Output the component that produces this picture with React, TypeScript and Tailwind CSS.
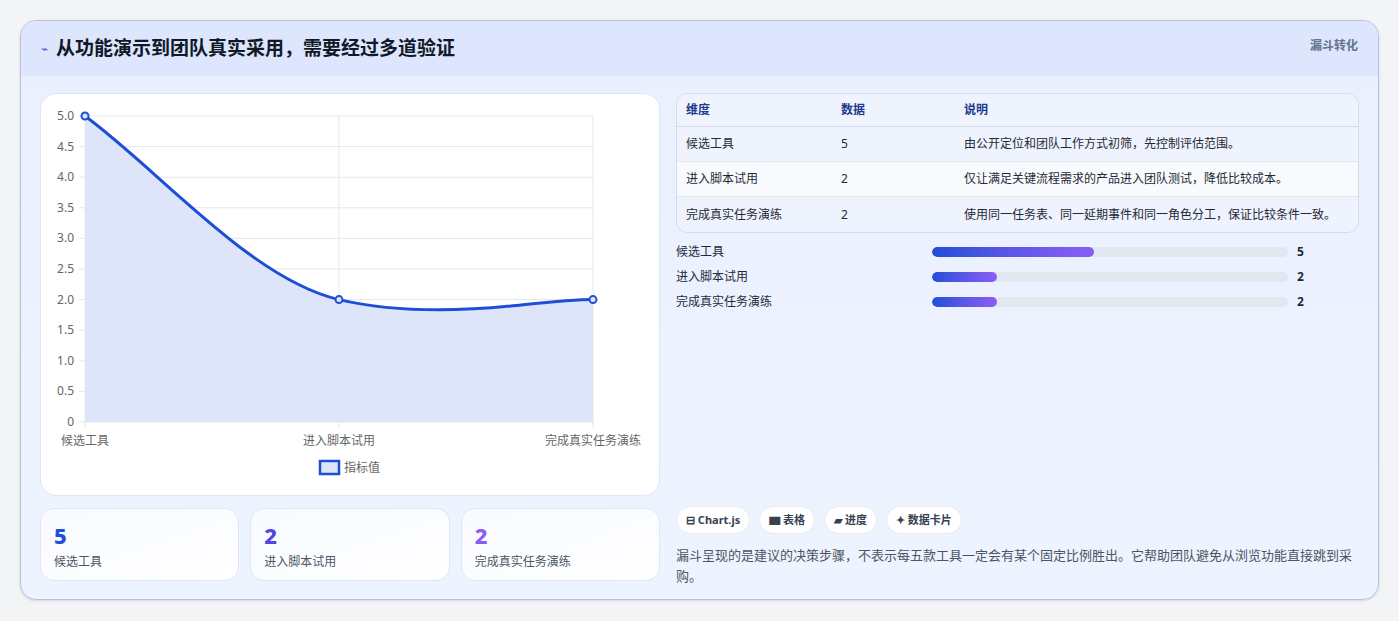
import React from "react";

const font = { fontFamily: '"Noto Sans", "Noto Sans CJK SC", sans-serif' };
const rows = [
  ["候选工具", "5", "由公开定位和团队工作方式初筛，先控制评估范围。", 45.5],
  ["进入脚本试用", "2", "仅让满足关键流程需求的产品进入团队测试，降低比较成本。", 18.2],
  ["完成真实任务演练", "2", "使用同一任务表、同一延期事件和同一角色分工，保证比较条件一致。", 18.2],
] as const;

function Chart() {
  const ys = [0, 0.5, 1, 1.5, 2, 2.5, 3, 3.5, 4, 4.5, 5];
  const Y = (v: number) => 328 - v * 61.2;
  const curve = "M44,22 C120,78 210,185 298,205.6 C360,220 430,216 470,212 C500,209 530,205.6 552,205.6";
  return (
    <svg width="619" height="402" className="block">
      {ys.map((v) => (
        <g key={v}>
          <line x1="38" x2="552" y1={Y(v)} y2={Y(v)} stroke="#e5e7eb" />
          <text x="33" y={Y(v) + 4} textAnchor="end" fontSize="12" fill="#666" style={font}>{v === 0 ? "0" : v.toFixed(1)}</text>
        </g>
      ))}
      {[44, 298, 552].map((x) => <line key={x} x1={x} x2={x} y1="22" y2="334" stroke="#e5e7eb" />)}
      <path d={curve + " L552,328 L44,328 Z"} fill="#dfe5f8" />
      <path d={curve} fill="none" stroke="#1d4ed8" strokeWidth="3" />
      {[[44, 22], [298, 205.6], [552, 205.6]].map(([x, y]) => (
        <circle key={x} cx={x} cy={y} r="3.5" fill="#dfe5f8" stroke="#1d4ed8" strokeWidth="2" />
      ))}
      <text x="44" y="351" textAnchor="middle" fontSize="12" fill="#666" style={font}>候选工具</text>
      <text x="298" y="351" textAnchor="middle" fontSize="12" fill="#666" style={font}>进入脚本试用</text>
      <text x="552" y="351" textAnchor="middle" fontSize="12" fill="#666" style={font}>完成真实任务演练</text>
      <rect x="279" y="367" width="19" height="13" fill="#dfe5f8" stroke="#1d4ed8" strokeWidth="2.5" />
      <text x="303" y="378" fontSize="12" fill="#666" style={font}>指标值</text>
    </svg>
  );
}

export default function App() {
  return (
    <div style={font} className="w-[1399px] h-[621px] bg-[#f3f4f6] pt-[20px] pl-[20px]">
      <div className="w-[1359px] h-[580px] rounded-[16px] border border-[#b3c1ea] overflow-hidden bg-gradient-to-b from-[#e9effd] to-[#eef4ff] shadow-sm">
        <div className="h-[55px] bg-[#dde6fd] flex items-center justify-between pl-[20px] pr-[20px]">
          <div className="flex items-center gap-[8px]">
            <span className="text-[#3b5bdb] text-[12px]">⌁</span>
            <span className="text-[19px] font-bold text-[#111827]">从功能演示到团队真实采用，需要经过多道验证</span>
          </div>
          <span className="self-start mt-[16px] text-[12px] font-bold text-[#64748b]">漏斗转化</span>
        </div>
        <div className="flex gap-[16px] px-[19px] pt-[17px]">
          <div className="w-[620px] flex flex-col gap-[12px]">
            <div className="h-[403px] bg-white rounded-[16px] border border-[#dfe6f5]"><Chart /></div>
            <div className="grid grid-cols-3 gap-[11px]">
              {[["5", "候选工具", "#1d4ed8"], ["2", "进入脚本试用", "#4f46e5"], ["2", "完成真实任务演练", "#8b5cf6"]].map(([n, l, c]) => (
                <div key={l} className="h-[73px] rounded-[14px] border border-[#dfe6f5] bg-gradient-to-br from-[#f8faff] to-white px-[13px] pt-[12px]">
                  <div className="text-[22px] font-extrabold leading-[28px]" style={{ color: c }}>{n}</div>
                  <div className="text-[12px] text-[#4b5563] mt-[4px]">{l}</div>
                </div>
              ))}
            </div>
          </div>
          <div className="flex-1 flex flex-col">
            <div className="rounded-[12px] border border-[#d4dbe9] overflow-hidden text-[12px]">
              <div className="h-[33px] flex items-center bg-[#eef3fd] border-b border-[#d4dbe9] font-bold text-[#1e3a8a]">
                <span className="w-[164px] pl-[9px]">维度</span><span className="w-[123px]">数据</span><span>说明</span>
              </div>
              {rows.map(([a, b, c], i) => (
                <div key={a} className={`h-[35px] flex items-center text-[#1f2937] ${i === 1 ? "bg-[#f8fafd]" : "bg-[#eef3fd]"} ${i < 2 ? "border-b border-[#e2e8f0]" : ""}`}>
                  <span className="w-[164px] pl-[9px]">{a}</span><span className="w-[123px]">{b}</span><span>{c}</span>
                </div>
              ))}
            </div>
            <div className="flex flex-col gap-[8px] mt-[10px]">
              {rows.map(([a, b, , p]) => (
                <div key={a} className="flex items-center h-[17px] text-[12px] text-[#1f2937]">
                  <span className="w-[256px]">{a}</span>
                  <div className="w-[356px] h-[10px] rounded-full bg-[#e2e8f0] overflow-hidden">
                    <div className="h-full rounded-full bg-gradient-to-r from-[#1d4ed8] to-[#8b5cf6]" style={{ width: `${p}%` }} />
                  </div>
                  <span className="ml-[9px] font-bold">{b}</span>
                </div>
              ))}
            </div>
            <div className="flex gap-[9px] mt-[196px]">
              {["⊟ Chart.js", "▆ 表格", "▰ 进度", "✦ 数据卡片"].map((t) => (
                <span key={t} className="h-[28px] px-[9px] flex items-center rounded-full bg-white border border-[#e5eaf3] text-[11px] font-bold text-[#374151]">{t}</span>
              ))}
            </div>
            <p className="mt-[11px] text-[13px] leading-[21px] text-[#4b5563] pr-[4px]">漏斗呈现的是建议的决策步骤，不表示每五款工具一定会有某个固定比例胜出。它帮助团队避免从浏览功能直接跳到采购。</p>
          </div>
        </div>
      </div>
    </div>
  );
}
